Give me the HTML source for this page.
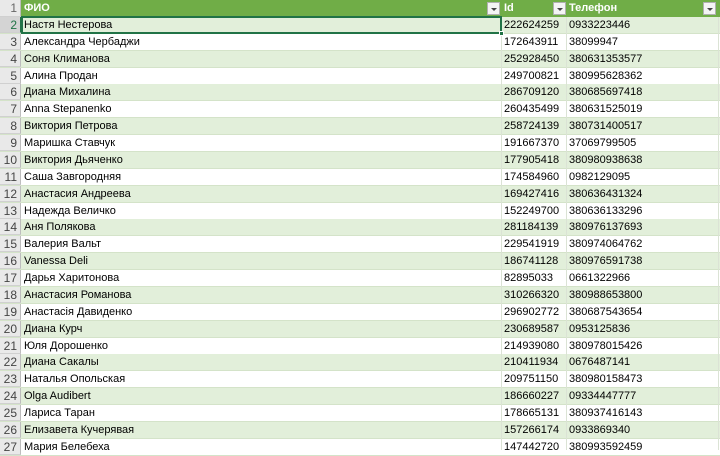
<!DOCTYPE html>
<html><head><meta charset="utf-8"><style>
*{margin:0;padding:0;box-sizing:border-box}
body{width:720px;height:450px;overflow:hidden;background:#fff;font-family:"Liberation Sans","DejaVu Sans",sans-serif;font-size:11px;color:#000;position:relative}
.r{position:absolute;left:0;width:720px;height:17px;border-bottom:1px solid #d4e3c9}
.g{background:#e2efda}
.w{background:#fff}
.n{position:absolute;left:0;top:0;width:21px;height:100%;background:#e9e9e9;border-right:1px solid #bdbdbd;border-bottom:1px solid #d0d0d0;color:#444;text-align:right;padding-right:3px;line-height:17px;font-size:12px}
.c{position:absolute;top:0;line-height:17px;white-space:nowrap}
.a{left:24px}.b{left:504px}.d{left:569px}
.vl{position:absolute;top:17px;width:1px;height:433px;background:#dbe3d5}
.h{background:#70ad47;color:#fff;font-weight:bold}
.dd{position:absolute;top:2px;width:13px;height:13px;background:#f4f4f4;border:1px solid #b0b0b0}
.dd:after{content:"";position:absolute;left:3px;top:5px;border-left:3px solid transparent;border-right:3px solid transparent;border-top:3px solid #444}
</style></head><body>
<div class="r h" style="top:0;border-bottom:none"><div class="n" style="background:#e9e9e9;color:#666;font-weight:normal">1</div><div class="c a">ФИО</div><div class="dd" style="left:487px"></div><div class="c b">Id</div><div class="dd" style="left:553px"></div><div class="c d">Телефон</div><div class="dd" style="left:703px"></div></div>
<div class="r g" style="top:16.9px"><div class="n" style="background:#d4d4d4;color:#217346;border-right:1px solid #217346">2</div><div class="c a">Настя Нестерова</div><div class="c b">222624259</div><div class="c d">0933223446</div></div>
<div class="r w" style="top:33.75px"><div class="n">3</div><div class="c a">Александра Чербаджи</div><div class="c b">172643911</div><div class="c d">38099947</div></div>
<div class="r g" style="top:50.6px"><div class="n">4</div><div class="c a">Соня Климанова</div><div class="c b">252928450</div><div class="c d">380631353577</div></div>
<div class="r w" style="top:67.5px"><div class="n">5</div><div class="c a">Алина Продан</div><div class="c b">249700821</div><div class="c d">380995628362</div></div>
<div class="r g" style="top:84.4px"><div class="n">6</div><div class="c a">Диана Михалина</div><div class="c b">286709120</div><div class="c d">380685697418</div></div>
<div class="r w" style="top:101.25px"><div class="n">7</div><div class="c a">Anna Stepanenko</div><div class="c b">260435499</div><div class="c d">380631525019</div></div>
<div class="r g" style="top:118.1px"><div class="n">8</div><div class="c a">Виктория Петрова</div><div class="c b">258724139</div><div class="c d">380731400517</div></div>
<div class="r w" style="top:135px"><div class="n">9</div><div class="c a">Маришка Ставчук</div><div class="c b">191667370</div><div class="c d">37069799505</div></div>
<div class="r g" style="top:151.9px"><div class="n">10</div><div class="c a">Виктория Дьяченко</div><div class="c b">177905418</div><div class="c d">380980938638</div></div>
<div class="r w" style="top:168.75px"><div class="n">11</div><div class="c a">Саша Завгородняя</div><div class="c b">174584960</div><div class="c d">0982129095</div></div>
<div class="r g" style="top:185.6px"><div class="n">12</div><div class="c a">Анастасия Андреева</div><div class="c b">169427416</div><div class="c d">380636431324</div></div>
<div class="r w" style="top:202.5px"><div class="n">13</div><div class="c a">Надежда Величко</div><div class="c b">152249700</div><div class="c d">380636133296</div></div>
<div class="r g" style="top:219.4px"><div class="n">14</div><div class="c a">Аня Полякова</div><div class="c b">281184139</div><div class="c d">380976137693</div></div>
<div class="r w" style="top:236.25px"><div class="n">15</div><div class="c a">Валерия Вальт</div><div class="c b">229541919</div><div class="c d">380974064762</div></div>
<div class="r g" style="top:253.1px"><div class="n">16</div><div class="c a">Vanessa Deli</div><div class="c b">186741128</div><div class="c d">380976591738</div></div>
<div class="r w" style="top:270px"><div class="n">17</div><div class="c a">Дарья Харитонова</div><div class="c b">82895033</div><div class="c d">0661322966</div></div>
<div class="r g" style="top:286.9px"><div class="n">18</div><div class="c a">Анастасия Романова</div><div class="c b">310266320</div><div class="c d">380988653800</div></div>
<div class="r w" style="top:303.75px"><div class="n">19</div><div class="c a">Анастасія Давиденко</div><div class="c b">296902772</div><div class="c d">380687543654</div></div>
<div class="r g" style="top:320.6px"><div class="n">20</div><div class="c a">Диана Курч</div><div class="c b">230689587</div><div class="c d">0953125836</div></div>
<div class="r w" style="top:337.5px"><div class="n">21</div><div class="c a">Юля Дорошенко</div><div class="c b">214939080</div><div class="c d">380978015426</div></div>
<div class="r g" style="top:354.4px"><div class="n">22</div><div class="c a">Диана Сакалы</div><div class="c b">210411934</div><div class="c d">0676487141</div></div>
<div class="r w" style="top:371.25px"><div class="n">23</div><div class="c a">Наталья Опольская</div><div class="c b">209751150</div><div class="c d">380980158473</div></div>
<div class="r g" style="top:388.1px"><div class="n">24</div><div class="c a">Olga Audibert</div><div class="c b">186660227</div><div class="c d">09334447777</div></div>
<div class="r w" style="top:405px"><div class="n">25</div><div class="c a">Лариса Таран</div><div class="c b">178665131</div><div class="c d">380937416143</div></div>
<div class="r g" style="top:421.9px"><div class="n">26</div><div class="c a">Елизавета Кучерявая</div><div class="c b">157266174</div><div class="c d">0933869340</div></div>
<div class="r w" style="top:438.75px"><div class="n">27</div><div class="c a">Мария Белебеха</div><div class="c b">147442720</div><div class="c d">380993592459</div></div>
<div class="vl" style="left:501px"></div>
<div class="vl" style="left:566px"></div>
<div class="vl" style="left:718px"></div>
<div style="position:absolute;left:21px;top:16px;width:481px;height:18px;border:2px solid #217346"></div>
<div style="position:absolute;left:499px;top:31px;width:5px;height:5px;background:#217346;border:1px solid #fff"></div>
</body></html>
